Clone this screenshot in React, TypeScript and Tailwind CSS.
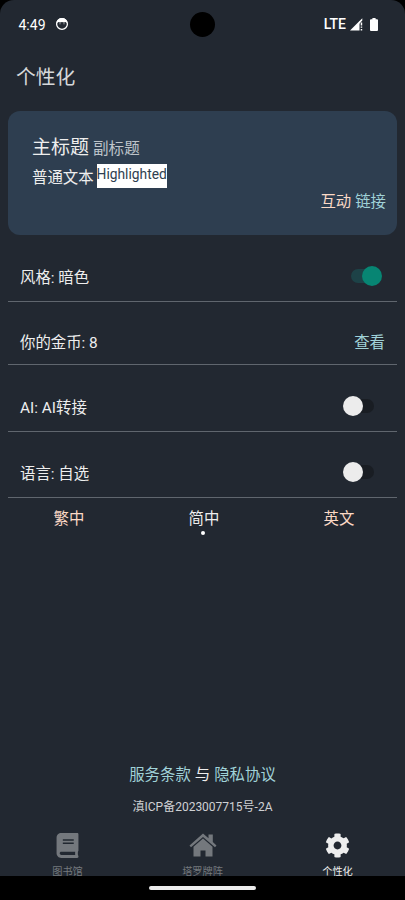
import type { ReactNode } from "react";
import { FaBook, FaCog } from "react-icons/fa";

function StatusBar() {
  return (
    <div className="relative flex h-12 items-center justify-between pr-[27px] pl-[18.5px] text-[14px] text-white">
      <div className="flex items-center pt-px">
        <span className="w-[36.5px] leading-4">4:49</span>
        <svg width="14" height="14" viewBox="0 0 14 14" className="-mt-px">
          <circle cx="7" cy="7" r="5.4" fill="none" stroke="#fff" strokeWidth="1.3" />
          <path d="M1.5 6.2C1.7 3 4 1 7 1s5.3 2 5.5 5.2L10.5 5 9 5.4 7 5 5 5.4 3.5 5z" fill="#fff" />
          <circle cx="5" cy="6.8" r="0.5" fill="#fff" />
          <circle cx="9" cy="6.8" r="0.5" fill="#fff" />
        </svg>
      </div>
      <div className="absolute top-3 left-[190px] size-[25px] rounded-full bg-black" />
      <div className="flex items-center">
        <span className="font-medium leading-4">LTE</span>
        <svg width="13" height="13" viewBox="0 0 13 13" className="ml-[4px]">
          <path d="M0 12.5 9.5 3v9.5z" fill="#fff" />
          <path d="M9 3.5 12.3.2v2.4L9 6zM10.7 4.5h1.5v3h-1.5zM10.7 8.5h1.5v1.2h-1.5zM10.7 11h1.5v1.5h-1.5z" fill="#fff" />
        </svg>
        <svg width="8" height="13" viewBox="0 0 8 13" className="ml-[7px]">
          <path d="M2.4 0h3.2v1.2H7a1 1 0 0 1 1 1V12a1 1 0 0 1-1 1H1a1 1 0 0 1-1-1V2.2a1 1 0 0 1 1-1h1.4z" fill="#fff" />
        </svg>
      </div>
    </div>
  );
}

function HomeIcon() {
  return (
    <svg width="28" height="24" viewBox="0 0 28 24" fill="currentColor">
      <path d="M14 .5 19.5 5.3V1.5H23.8V9.1L27.5 12.4 26 14.3 14 3.9 2 14.3.5 12.4z" />
      <path d="M14 5.6 23.5 13.8V23.5H16.5V17.5H11.5V23.5H4.5V13.8z" />
    </svg>
  );
}

function Toggle({ on = false }: { on?: boolean }) {
  if (on) {
    return (
      <div className="mr-[2px] mb-[2px] flex h-5 w-8 items-center">
        <div className="h-[14px] w-5 rounded-l-full bg-[#1d4247]" />
        <div className="-ml-[9px] size-5 shrink-0 rounded-full bg-[#078573]" />
      </div>
    );
  }
  return (
    <div className="mr-[10px] mb-[2px] flex h-5 w-8 items-center">
      <div className="z-10 size-5 shrink-0 rounded-full bg-[#ececec]" />
      <div className="-ml-[9px] h-[14px] w-5 rounded-r-full bg-[#191d23]" />
    </div>
  );
}

function Row({ label, className, children }: { label: string; className: string; children: ReactNode }) {
  return (
    <div className={`mx-2 flex items-center justify-between border-b border-[#60666e] pr-3 pl-3 ${className}`}>
      <span className="pt-[2px]">{label}</span>
      {children}
    </div>
  );
}

const languages = [
  { name: "繁中", active: false },
  { name: "简中", active: true },
  { name: "英文", active: false },
];

const tabs = [
  { name: "图书馆", icon: <FaBook size={25} />, active: false },
  { name: "塔罗牌阵", icon: <HomeIcon />, active: false },
  { name: "个性化", icon: <FaCog size={25} />, active: true },
];

export default function App() {
  return (
    <div className="h-[900px] w-[405px] overflow-hidden bg-black font-['Roboto','Noto_Sans_CJK_SC',sans-serif] text-[15.4px] leading-5 text-[#eeeeee]">
      <div className="flex h-[876px] flex-col overflow-hidden rounded-t-[14px] bg-[#222831]">
        <StatusBar />
        <h1 className="h-[63px] pt-[16px] pl-4 text-[19.8px] leading-7 text-[#d6d8da]">个性化</h1>

        <section className="mx-2 h-[124px] rounded-xl bg-[#2e3e50] pt-[23px] pr-[11px] pl-6">
          <div className="flex h-7 items-baseline gap-1 leading-7">
            <span className="text-[19px]">主标题</span>
            <span className="text-[15.6px] text-[#bdc3c9]">副标题</span>
          </div>
          <div className="flex h-[28px] items-start gap-[3px] pt-[2px]">
            <span className="pt-[4px]">普通文本</span>
            <span className="h-6 bg-white text-[13.8px] leading-[21px] text-[#2e3e50]">Highlighted</span>
          </div>
          <div className="flex justify-end gap-1 pt-[2px]">
            <span className="text-[#fbd9c6]">互动</span>
            <span className="text-[#a0d2d8]">链接</span>
          </div>
        </section>

        <Row label="风格: 暗色" className="h-[67px] pt-[18px]">
          <Toggle on />
        </Row>
        <Row label="你的金币: 8" className="h-[63px] pt-[17px]">
          <span className="pt-[2px] text-[#a0d2d8]">查看</span>
        </Row>
        <Row label="AI: AI转接" className="h-[67px] pt-[18px]">
          <Toggle />
        </Row>
        <Row label="语言: 自选" className="h-[66px] pt-[17px]">
          <Toggle />
        </Row>

        <div className="grid grid-cols-3 pt-[11px]">
          {languages.map((lang) => (
            <div key={lang.name} className={`flex flex-col items-center ${lang.active ? "" : "text-[#fbd9c6]"}`}>
              <span className="pl-[3px]">{lang.name}</span>
              {lang.active && <span className="mt-[2px] size-1 rounded-full bg-white" />}
            </div>
          ))}
        </div>

        <footer className="mt-auto">
          <div className="flex justify-center gap-1">
            <span className="text-[#a0d2d8]">服务条款</span>
            <span>与</span>
            <span className="text-[#a0d2d8]">隐私协议</span>
          </div>
          <p className="mt-3 text-center text-[12px] leading-5 text-[#cfd1d4]">滇ICP备2023007715号-2A</p>
          <nav className="mt-[13px] grid h-[46px] grid-cols-3">
            {tabs.map((tab) => (
              <div key={tab.name} className={`flex flex-col items-center ${tab.active ? "text-[#eeeeee]" : "text-[#74787d]"}`}>
                <div className="flex h-[30px] items-center">{tab.icon}</div>
                <span className="mt-[4px] text-[10.2px] leading-4">{tab.name}</span>
              </div>
            ))}
          </nav>
        </footer>
      </div>
      <div className="mx-auto mt-[10px] h-1 w-[107px] rounded-full bg-[#ececec]" />
    </div>
  );
}
